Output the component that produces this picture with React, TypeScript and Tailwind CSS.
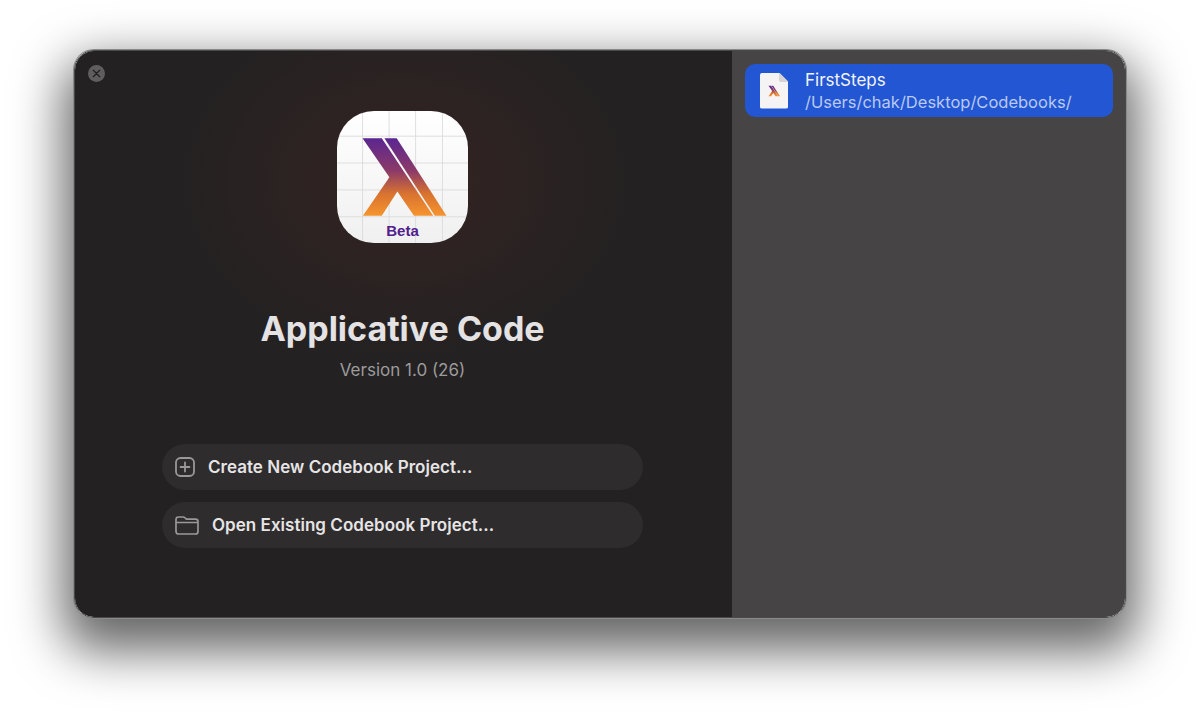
import React from "react";

function Lambda({ id, className }: { id: string; className?: string }) {
  return (
    <svg viewBox="110 65 395 393" className={className}>
      <defs>
        <linearGradient id={id} x1="0" y1="145" x2="0" y2="378" gradientUnits="userSpaceOnUse">
          <stop offset="0" stopColor="#5b2691" />
          <stop offset="0.42" stopColor="#8b3a68" />
          <stop offset="0.72" stopColor="#d9732f" />
          <stop offset="1" stopColor="#f5942f" />
        </linearGradient>
      </defs>
      <path d="M187 145H245L400 378H342L292 305L245 378H188L268 262Z" fill={`url(#${id})`} />
      <path d="M253 145H290L440 378H405Z" fill={`url(#${id})`} />
    </svg>
  );
}

function AppIcon() {
  const v = [187, 267, 347, 428];
  const h = [140, 220, 300, 380];
  return (
    <div className="relative h-[132px] w-[131px] overflow-hidden rounded-[37px] bg-gradient-to-b from-white to-[#f1f0f1]">
      <svg viewBox="110 65 395 393" preserveAspectRatio="none" className="absolute inset-0 h-full w-full">
        {v.map((x) => (
          <line key={x} x1={x} x2={x} y1="65" y2="458" stroke="#d8d8da" strokeWidth="2.5" />
        ))}
        {h.map((y) => (
          <line key={y} x1="110" x2="505" y1={y} y2={y} stroke="#d8d8da" strokeWidth="2.5" />
        ))}
      </svg>
      <Lambda id="lam-big" className="absolute inset-0 h-full w-full" />
      <span className="absolute bottom-[3px] left-0 w-full text-center font-['Liberation_Sans',sans-serif] text-[15px] leading-[18px] font-bold text-[#51208c]">
        Beta
      </span>
    </div>
  );
}

function ActionButton({ icon, label }: { icon: React.ReactNode; label: string }) {
  return (
    <div className="flex h-[46px] w-[481px] items-center gap-[13px] rounded-[23px] bg-[#2e2c2d] pl-[13px]">
      {icon}
      <span className="pt-[1px] text-[17px] tracking-[0.03px] font-semibold text-[#e6e4e5]">{label}</span>
    </div>
  );
}

export default function App() {
  return (
    <div className="h-[716px] w-[1200px] overflow-hidden bg-white pt-[50px] pl-[74px] font-['Inter',sans-serif]">
      <div className="relative flex h-[568px] w-[1052px] overflow-hidden rounded-[20px] border border-[#4a4849] shadow-[0_0_0_1px_#8a8a8a,0_22px_50px_11px_rgba(0,0,0,0.6)]">
        <div className="relative flex w-[657px] flex-col items-center bg-[#232122] pt-[60px] pr-[2px]">
          <div className="absolute top-[-60px] left-[90px] h-[380px] w-[480px] bg-[radial-gradient(closest-side,#40262299,#23212200)]" />
          <div className="absolute top-[14px] left-[13px] flex h-[17px] w-[17px] items-center justify-center rounded-full bg-[#5f5d5e]">
            <svg viewBox="0 0 10 10" className="h-[9px] w-[9px]" stroke="#232122" strokeWidth="1.5" strokeLinecap="round">
              <path d="M1.5 1.5L8.5 8.5M8.5 1.5L1.5 8.5" />
            </svg>
          </div>
          <div className="relative flex flex-col items-center">
            <AppIcon />
            <h1 className="mt-[64px] text-[34px] leading-[44px] font-bold text-[#e4e2e3]">Applicative Code</h1>
            <p className="mt-[7px] text-[17px] leading-[24px] text-[#9c9a9b]">Version 1.0 (26)</p>
            <div className="mt-[62px] flex flex-col gap-[12px]">
              <ActionButton
                label="Create New Codebook Project..."
                icon={
                  <svg viewBox="0 0 20 20" className="h-[20px] w-[20px] shrink-0" fill="none" stroke="#9a9899" strokeWidth="1.8" strokeLinecap="round">
                    <rect x="1" y="1" width="18" height="18" rx="4.5" />
                    <path d="M10 5.5V14.5M5.5 10H14.5" />
                  </svg>
                }
              />
              <ActionButton
                label="Open Existing Codebook Project..."
                icon={
                  <svg viewBox="0 0 24 20" className="h-[20px] w-[24px] shrink-0" fill="none" stroke="#9a9899" strokeWidth="1.7" strokeLinejoin="round">
                    <path d="M1 4.5C1 2.8 2 2 3.4 2H8C9 2 9.6 2.4 10.2 3L11.4 4.2H20.5C22.2 4.2 23 5.2 23 6.6V16.5C23 18 22.2 19 20.5 19H3.5C2 19 1 18 1 16.5Z" />
                    <path d="M1 7.5H23" />
                  </svg>
                }
              />
            </div>
          </div>
        </div>
        <div className="flex-1 bg-[#464445] pt-[13px] pl-[13px]">
          <div className="flex h-[53px] w-[368px] items-center rounded-[10px] bg-[#2356d2] pl-[15px]">
            <div className="relative h-[36px] w-[28px] shrink-0 rounded-[2px] bg-[#f5f3f3] [clip-path:polygon(0_0,68%_0,100%_25%,100%_100%,0_100%)]">
              <div className="absolute top-0 right-0 h-[9px] w-[9px] rounded-bl-[2px] bg-[#d5d3d6]" />
              <Lambda id="lam-small" className="absolute top-[9px] left-[5px] h-[18px] w-[18px]" />
            </div>
            <div className="ml-[17px] flex flex-col text-[17px] leading-[22px]">
              <span className="text-[#f2f3f8]">FirstSteps</span>
              <span className="text-[16.5px] text-[#b9c9f2]">/Users/chak/Desktop/Codebooks/</span>
            </div>
          </div>
        </div>
      </div>
    </div>
  );
}
